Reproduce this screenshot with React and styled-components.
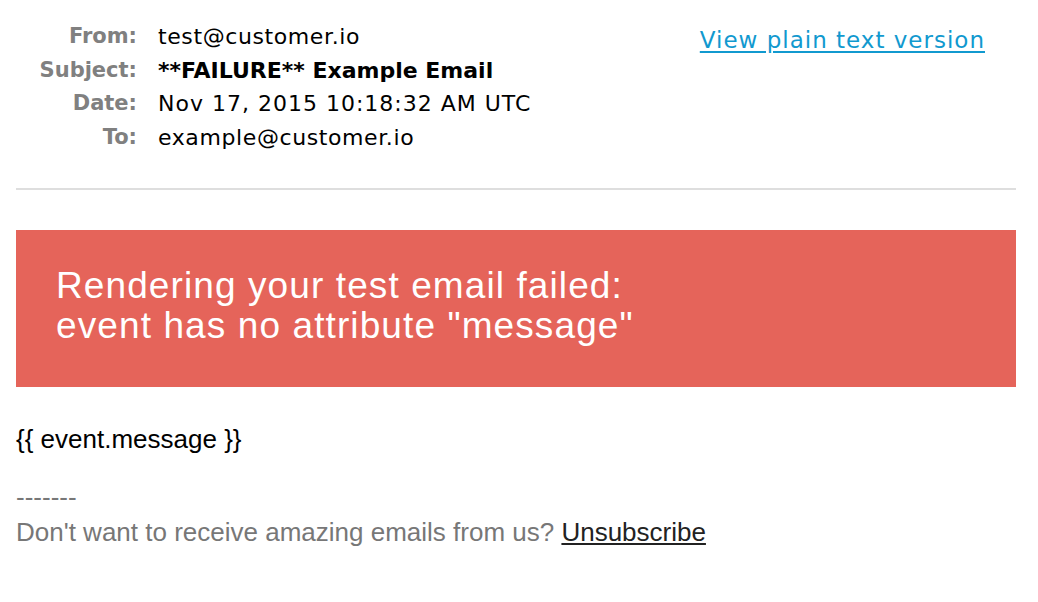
import React from "react";
import styled, { createGlobalStyle } from "styled-components";

const Global = createGlobalStyle`
  html, body { margin: 0; padding: 0; background: #fff; }
  body { width: 1038px; height: 602px; overflow: hidden; }
`;

const Page = styled.div`
  padding: 0 22px 0 16px;
  width: 1000px;
`;

const Header = styled.div`
  display: flex;
  justify-content: space-between;
  align-items: flex-start;
  padding-top: 20px;
  padding-bottom: 34px;
  border-bottom: 2px solid #dedede;
  font-family: "DejaVu Sans", Verdana, sans-serif;
  font-size: 21px;
`;

const Meta = styled.div`
  display: grid;
  grid-template-columns: 121px auto;
  column-gap: 21px;
  line-height: 33.5px;
`;

const Label = styled.div`
  text-align: right;
  color: #808080;
  font-weight: bold;
`;

const Value = styled.div`
  color: #000;
  font-size: 22px;
  font-weight: ${(p) => (p.$bold ? "bold" : "normal")};
  letter-spacing: ${(p) => p.$spacing || 0}px;
`;

const PlainLink = styled.a`
  color: #1199cf;
  font-size: 23px;
  letter-spacing: 1px;
  text-decoration: underline;
  text-underline-offset: 3px;
  margin-top: 5px;
  margin-right: 31px;
  line-height: 30px;
`;

const Banner = styled.div`
  margin-top: 40px;
  background: #e5645a;
  color: #fff;
  font-family: "Liberation Sans", Arial, sans-serif;
  font-size: 37px;
  line-height: 40px;
  padding: 36px 40px 41px;
  letter-spacing: 1.1px;
`;

const Body = styled.div`
  font-family: "Liberation Sans", Arial, sans-serif;
  font-size: 26px;
`;

const Placeholder = styled.p`
  margin: 37px 0 0;
  line-height: 30px;
  color: #000;
`;

const Footer = styled.p`
  margin: 26px 0 0;
  line-height: 35px;
  color: #777;
`;

const Unsub = styled.a`
  color: #222;
  text-decoration: underline;
`;

export default function App() {
  const rows = [
    ["From:", "test@customer.io", false, 0.6],
    ["Subject:", "**FAILURE** Example Email", true, 0],
    ["Date:", "Nov 17, 2015 10:18:32 AM UTC", false, 1],
    ["To:", "example@customer.io", false, 0.6],
  ];
  return (
    <>
      <Global />
      <Page>
        <Header>
          <Meta>
            {rows.map(([l, v, b, s]) => (
              <React.Fragment key={l}>
                <Label>{l}</Label>
                <Value $bold={b} $spacing={s}>{v}</Value>
              </React.Fragment>
            ))}
          </Meta>
          <PlainLink href="#">View plain text version</PlainLink>
        </Header>
        <Banner>
          Rendering your test email failed:
          <br />
          event has no attribute "message"
        </Banner>
        <Body>
          <Placeholder>{"{{ event.message }}"}</Placeholder>
          <Footer>
            -------
            <br />
            Don't want to receive amazing emails from us? <Unsub href="#">Unsubscribe</Unsub>
          </Footer>
        </Body>
      </Page>
    </>
  );
}
